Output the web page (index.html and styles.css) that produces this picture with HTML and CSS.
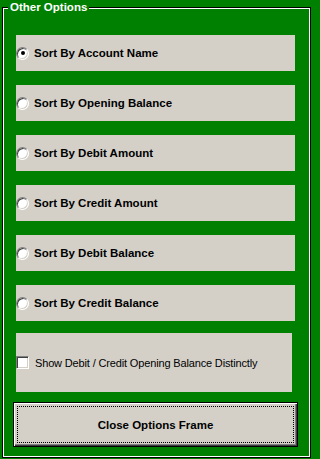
FILE: index.html
```html
<!DOCTYPE html>
<html>
<head>
<meta charset="utf-8">
<link rel="stylesheet" href="styles.css">
</head>
<body>
<div class="window">
  <div class="frame">
    <span class="legend">Other Options</span>
    <div class="inner">
      <div class="opt"><span class="radio checked"></span><span class="opt-label">Sort By Account Name</span></div>
      <div class="opt"><span class="radio"></span><span class="opt-label">Sort By Opening Balance</span></div>
      <div class="opt"><span class="radio"></span><span class="opt-label">Sort By Debit Amount</span></div>
      <div class="opt"><span class="radio"></span><span class="opt-label">Sort By Credit Amount</span></div>
      <div class="opt"><span class="radio"></span><span class="opt-label">Sort By Debit Balance</span></div>
      <div class="opt last"><span class="radio"></span><span class="opt-label">Sort By Credit Balance</span></div>
      <div class="chk-panel"><span class="check"></span><span class="chk-label">Show Debit / Credit Opening Balance Distinctly</span></div>
      <button class="btn"><span class="btn-text">Close Options Frame</span></button>
    </div>
  </div>
</div>
</body>
</html>
```

FILE: styles.css
```css
html, body {
  margin: 0;
  padding: 0;
}
body {
  width: 312px;
  height: 459px;
  background: #008000;
  font-family: "Liberation Sans", Arial, sans-serif;
  overflow: hidden;
}
.window {
  width: 312px;
  height: 459px;
  padding-top: 7px;
  box-sizing: border-box;
}
.frame {
  position: relative;
  margin: 0 1px 0 2px;
  height: 451px;
  border: 1px solid #000;
  box-sizing: border-box;
}
.legend {
  position: absolute;
  left: 5px;
  top: -7px;
  padding: 0 2px;
  background: #008000;
  color: #fff;
  font-weight: bold;
  font-size: 11.5px;
  line-height: 13px;
  white-space: nowrap;
}
.inner {
  height: 100%;
  border: 1px solid #fff;
  box-sizing: border-box;
  padding: 26px 0 0 12px;
  display: flex;
  flex-direction: column;
  align-items: flex-start;
}
.opt {
  width: 279px;
  height: 36px;
  margin-bottom: 14px;
  background: #d4d0c8;
  display: flex;
  align-items: center;
  gap: 5px;
  flex-shrink: 0;
}
.opt.last {
  margin-bottom: 12px;
}
.opt-label {
  font-weight: bold;
  font-size: 11.5px;
  color: #000;
  white-space: nowrap;
}
.radio {
  position: relative;
  width: 13px;
  height: 13px;
  box-sizing: border-box;
  border-radius: 50%;
  border: 1px solid;
  border-color: #808080 #fff #fff #808080;
  box-shadow: inset 1px 1px 0 #404040, inset -1px -1px 0 #d4d0c8;
  background: #fff;
  flex-shrink: 0;
}
.radio.checked::after {
  content: "";
  position: absolute;
  left: 3.5px;
  top: 3.5px;
  width: 4px;
  height: 4px;
  border-radius: 50%;
  background: #000;
}
.chk-panel {
  width: 276px;
  height: 59px;
  margin-bottom: 10px;
  background: #d4d0c8;
  display: flex;
  align-items: center;
  gap: 6px;
  flex-shrink: 0;
}
.check {
  width: 13px;
  height: 13px;
  box-sizing: border-box;
  border: 1px solid;
  border-color: #808080 #fff #fff #808080;
  box-shadow: inset 1px 1px 0 #404040, inset -1px -1px 0 #d4d0c8;
  background: #fff;
  flex-shrink: 0;
}
.chk-label {
  font-size: 11px;
  letter-spacing: -0.15px;
  color: #000;
  white-space: nowrap;
}
.btn {
  position: relative;
  margin: 0 0 0 -3px;
  padding: 0;
  width: 285px;
  height: 45px;
  box-sizing: border-box;
  background: #d4d0c8;
  border: 1px solid #000;
  border-radius: 0;
  box-shadow: inset 1px 1px 0 #fff, inset -1px -1px 0 #404040, inset -2px -2px 0 #808080;
  font-family: "Liberation Sans", Arial, sans-serif;
  font-weight: bold;
  font-size: 11.5px;
  color: #000;
  flex-shrink: 0;
}
.btn::after {
  content: "";
  position: absolute;
  left: 3px;
  top: 3px;
  right: 3px;
  bottom: 3px;
  border: 1px dotted #000;
}
```
